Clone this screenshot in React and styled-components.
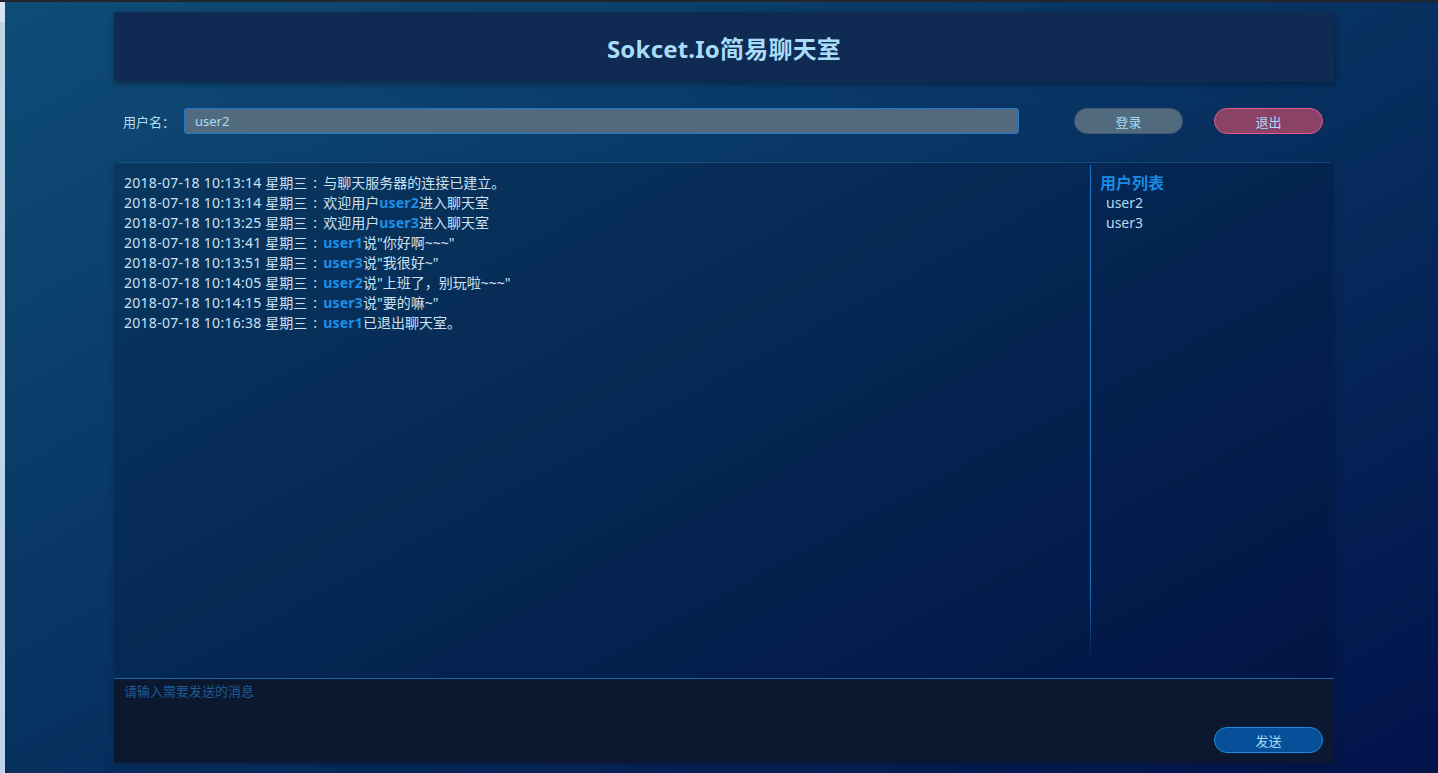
import styled, { createGlobalStyle } from 'styled-components';

const GlobalStyle = createGlobalStyle`
  html, body {
    margin: 0;
    padding: 0;
    height: 100%;
  }
  body {
    font-family: 'Noto Sans', 'Noto Sans CJK SC', sans-serif;
    background: #bfd5ea;
  }
  * {
    box-sizing: border-box;
  }
`;

const Screen = styled.div`
  display: flex;
  height: 773px;
  border-top: 2px solid #22262b;
`;

const SideStrip = styled.div`
  width: 5px;
  flex-shrink: 0;
  background: linear-gradient(to bottom, #d6e4f2 0, #d6e4f2 20px, #bfd5ea 20px);
`;

const Page = styled.div`
  flex: 1;
  background: linear-gradient(to bottom right, #0e4d77 0%, #07305f 50%, #02134a 100%);
  padding: 10px 104px 10px 109px;
  display: flex;
  flex-direction: column;
`;

const Header = styled.header`
  height: 70px;
  background: #0f2a53;
  border-radius: 3px;
  box-shadow: 0 2px 6px rgba(0, 0, 0, 0.35);
  display: flex;
  align-items: center;
  justify-content: center;
`;

const Title = styled.h1`
  margin: 0;
  font-size: 24px;
  font-weight: 700;
  color: #a9dcf7;
  letter-spacing: 0.2px;
`;

const LoginBar = styled.div`
  display: flex;
  align-items: center;
  height: 26px;
  margin: 26px 0 28px;
  padding: 0 11px 0 9px;
`;

const Label = styled.label`
  font-size: 13px;
  color: #b7dcf3;
  width: 61px;
  flex-shrink: 0;
`;

const NameInput = styled.input`
  width: 835px;
  height: 26px;
  background: #516a7e;
  border: 1px solid #2279cb;
  border-radius: 3px;
  color: #a9dcf7;
  font-family: inherit;
  font-size: 13px;
  padding: 0 10px;
  outline: none;
`;

const Actions = styled.div`
  margin-left: auto;
  display: flex;
  gap: 31px;
`;

const PillButton = styled.button`
  width: 109px;
  height: 26px;
  border-radius: 13px;
  font-family: inherit;
  font-size: 13px;
  color: #a9dcf7;
  cursor: pointer;
  background: ${(p) => (p.$variant === 'danger' ? '#8a4266' : p.$variant === 'primary' ? '#06509a' : '#516a7e')};
  border: 1px solid
    ${(p) => (p.$variant === 'danger' ? '#e05a8c' : p.$variant === 'primary' ? '#1a8ae6' : '#3f5a72')};
`;

const Chat = styled.section`
  display: flex;
  flex-direction: column;
  flex: 1;
  border-radius: 6px 6px 0 0;
  overflow: hidden;
  box-shadow: 0 2px 6px rgba(0, 0, 0, 0.2);
`;

const ChatBody = styled.div`
  flex: 1;
  display: flex;
  background: rgba(0, 10, 40, 0.22);
  border-top: 1px solid rgba(60, 140, 220, 0.35);
`;

const Messages = styled.div`
  flex: 1;
  padding: 10px 10px;
  font-size: 14px;
  line-height: 20px;
  color: #cbe2f3;
`;

const Line = styled.div`
  white-space: nowrap;
`;

const Time = styled.span`
  letter-spacing: 0.28px;
`;

const Colon = styled.span`
  display: inline-block;
  width: 16px;
  text-align: center;
`;

const Name = styled.span`
  color: #1e8fe6;
  font-weight: 700;
  letter-spacing: 0.2px;
`;

const UserList = styled.aside`
  width: 244px;
  flex-shrink: 0;
  position: relative;
  padding: 10px 10px;
  &::before {
    content: '';
    position: absolute;
    left: 0;
    top: 2px;
    height: 496px;
    width: 1px;
    background: linear-gradient(to bottom, #1b75c6 0%, #1b75c6 85%, rgba(27, 117, 198, 0));
  }
`;

const ListTitle = styled.div`
  font-size: 16px;
  font-weight: 700;
  line-height: 20px;
  color: #1a8ae2;
`;

const UserItem = styled.div`
  font-size: 14px;
  line-height: 20px;
  color: #b4dbf2;
  padding-left: 6px;
`;

const Composer = styled.div`
  height: 85px;
  background: #0c1830;
  border-top: 1px solid #1664aa;
  display: flex;
  flex-direction: column;
  padding: 3px 10px 10px;
`;

const MessageInput = styled.textarea`
  flex: 1;
  background: transparent;
  border: none;
  outline: none;
  resize: none;
  font-family: inherit;
  font-size: 13px;
  line-height: 18px;
  color: #b4dbf2;
  padding: 0;
  &::placeholder {
    color: #1d5c96;
  }
`;

const SendRow = styled.div`
  display: flex;
  justify-content: flex-end;
  padding-right: 1px;
`;

const logs = [
  { time: '2018-07-18 10:13:14', text: '与聊天服务器的连接已建立。' },
  { time: '2018-07-18 10:13:14', pre: '欢迎用户', user: 'user2', text: '进入聊天室' },
  { time: '2018-07-18 10:13:25', pre: '欢迎用户', user: 'user3', text: '进入聊天室' },
  { time: '2018-07-18 10:13:41', user: 'user1', text: '说"你好啊~~~"' },
  { time: '2018-07-18 10:13:51', user: 'user3', text: '说"我很好~"' },
  { time: '2018-07-18 10:14:05', user: 'user2', text: '说"上班了，别玩啦~~~"' },
  { time: '2018-07-18 10:14:15', user: 'user3', text: '说"要的嘛~"' },
  { time: '2018-07-18 10:16:38', user: 'user1', text: '已退出聊天室。' },
];

function App() {
  return (
    <>
      <GlobalStyle />
      <Screen>
        <SideStrip />
        <Page>
          <Header>
            <Title>Sokcet.Io简易聊天室</Title>
          </Header>
          <LoginBar>
            <Label>用户名：</Label>
            <NameInput defaultValue="user2" />
            <Actions>
              <PillButton>登录</PillButton>
              <PillButton $variant="danger">退出</PillButton>
            </Actions>
          </LoginBar>
          <Chat>
            <ChatBody>
              <Messages>
                {logs.map((l, i) => (
                  <Line key={i}>
                    <Time>{l.time}</Time> 星期三<Colon>:</Colon>
                    {l.pre}
                    {l.user && <Name>{l.user}</Name>}
                    {l.text}
                  </Line>
                ))}
              </Messages>
              <UserList>
                <ListTitle>用户列表</ListTitle>
                <UserItem>user2</UserItem>
                <UserItem>user3</UserItem>
              </UserList>
            </ChatBody>
            <Composer>
              <MessageInput placeholder="请输入需要发送的消息" />
              <SendRow>
                <PillButton $variant="primary">发送</PillButton>
              </SendRow>
            </Composer>
          </Chat>
        </Page>
      </Screen>
    </>
  );
}

export default App;
